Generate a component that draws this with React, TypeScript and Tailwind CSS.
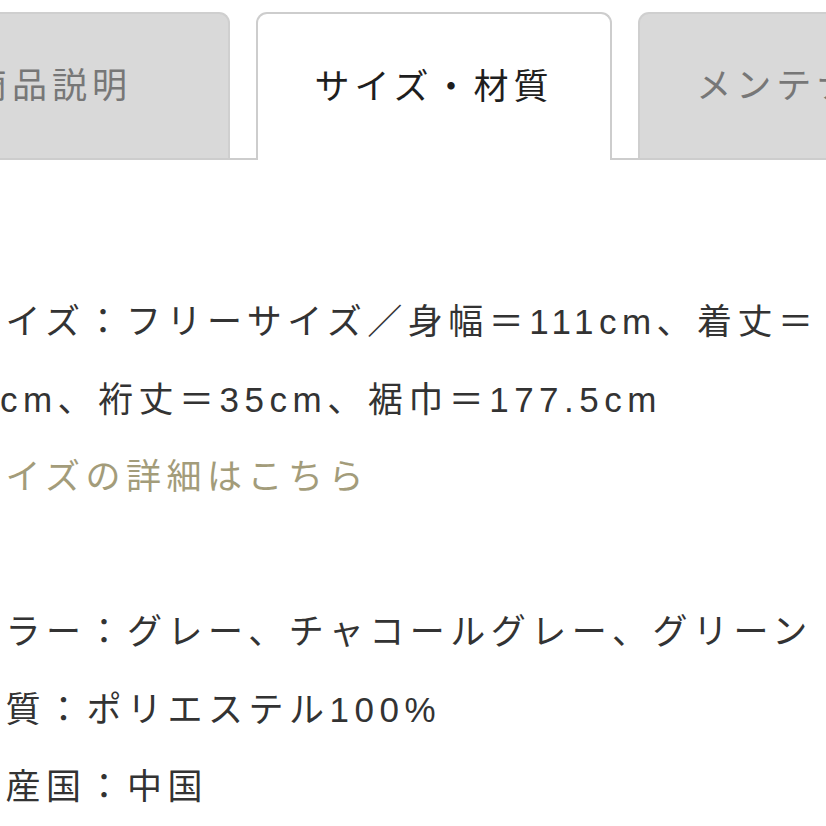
const FONT = "font-['Liberation_Sans','Noto_Sans_CJK_JP',sans-serif]";

const tabs = [
  { label: '商品説明', active: false },
  { label: 'サイズ・材質', active: true },
  { label: 'メンテナンス', active: false },
];

const App = () => {
  return (
    <div className={`w-[826px] h-[826px] overflow-hidden bg-white ${FONT}`}>
      {/* tabs */}
      <div className="pt-[12px]">
        <ul className="flex gap-[26px] -ml-[126px] border-b-2 border-[#cdcdcd] w-[1300px]">
          {tabs.map((t) => (
            <li
              key={t.label}
              className={`w-[356px] h-[146px] shrink-0 flex items-center justify-center rounded-t-[11px] border-2 border-b-0 text-[35px] tracking-[5px] ${
                t.active
                  ? 'bg-white border-[#cdcdcd] text-[#1e1e1e] -mb-[2px] h-[148px]'
                  : 'bg-[#d9d9d9] border-[#cfcfcf] text-[#777777]'
              }`}
            >
              {t.label}
            </li>
          ))}
        </ul>
      </div>

      {/* size / material */}
      <div className="pt-[123px] -ml-[35px] text-[35px] leading-[77.5px] tracking-[5.5px] text-[#333333] whitespace-nowrap">
        <p>サイズ：フリーサイズ／身幅＝111cm、着丈＝</p>
        <p className="-ml-[15px]">80cm、裄丈＝35cm、裾巾＝177.5cm</p>
        <p className="text-[#a39c7a]">サイズの詳細はこちら</p>
        <p>&nbsp;</p>
        <p>カラー：グレー、チャコールグレー、グリーン</p>
        <p>品質：ポリエステル100%</p>
        <p>原産国：中国</p>
      </div>
    </div>
  );
};

export default App;
